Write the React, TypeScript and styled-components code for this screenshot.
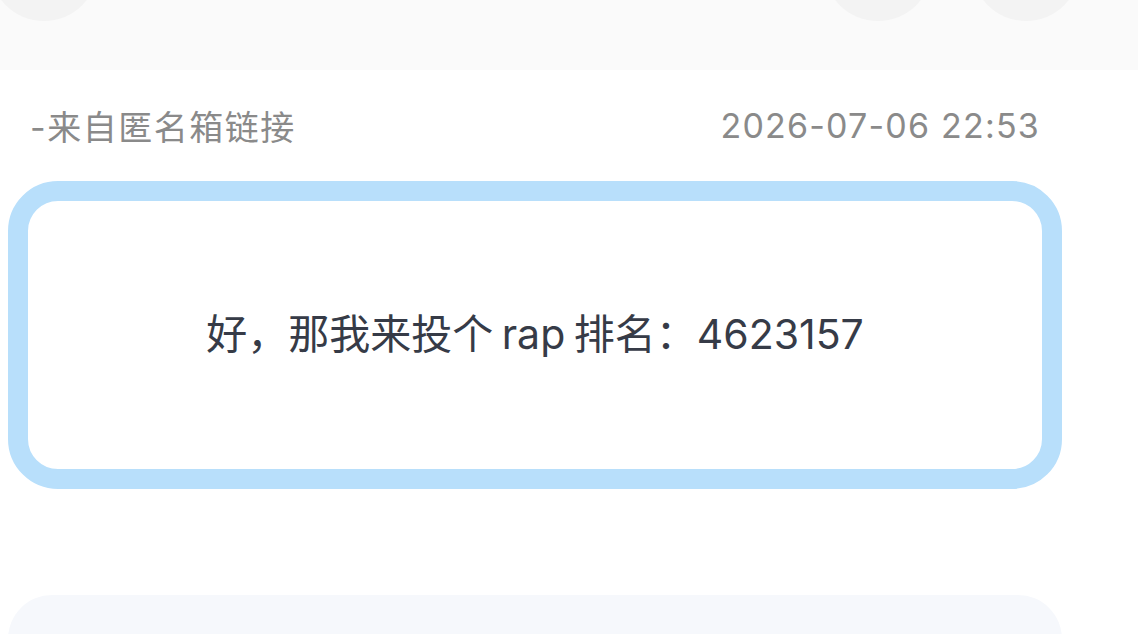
import React from "react";
import styled, { createGlobalStyle } from "styled-components";

const GlobalStyle = createGlobalStyle`
  html, body {
    margin: 0;
    padding: 0;
    background: #ffffff;
    overflow: hidden;
  }
  body {
    font-family: Inter, "Noto Sans CJK SC", "Noto Sans", sans-serif;
  }
`;

const Page = styled.div`
  width: 1138px;
  height: 634px;
  overflow: hidden;
  background: #ffffff;
`;

const TopBar = styled.div`
  height: 70px;
  background: #fafafa;
  display: flex;
  align-items: flex-start;
  justify-content: space-between;
  padding-right: 58px;
  overflow: hidden;
`;

const IconGroup = styled.div`
  display: flex;
  gap: 40px;
`;

const RoundButton = styled.div<{ $offset?: number }>`
  width: 108px;
  height: 108px;
  border-radius: 50%;
  background: #f3f3f3;
  margin-top: -87px;
  margin-left: ${(p) => p.$offset ?? 0}px;
  flex-shrink: 0;
`;

const Content = styled.div`
  margin-left: 8px;
  width: 1054px;
`;

const MetaRow = styled.div`
  display: flex;
  justify-content: space-between;
  align-items: center;
  height: 40px;
  margin-top: 35px;
  padding: 0 22px;
  color: #8a8a8a;
  font-size: 34px;
`;

const Source = styled.span`
  letter-spacing: 1.5px;
`;

const Time = styled.span`
  letter-spacing: 1.2px;
`;

const MessageCard = styled.div`
  box-sizing: border-box;
  margin-top: 36px;
  height: 308px;
  padding-bottom: 8px;
  border: 20px solid #b8dffb;
  border-radius: 50px;
  display: flex;
  align-items: center;
  justify-content: center;
  color: #363b47;
  font-size: 41px;
  word-spacing: -3px;
`;

const NextCard = styled.div`
  margin-top: 106px;
  height: 120px;
  border-radius: 44px;
  background: #f6f8fc;
`;

const App: React.FC = () => {
  return (
    <Page>
      <GlobalStyle />
      <TopBar>
        <RoundButton $offset={-10} />
        <IconGroup>
          <RoundButton />
          <RoundButton />
        </IconGroup>
      </TopBar>
      <Content>
        <MetaRow>
          <Source>-来自匿名箱链接</Source>
          <Time>2026-07-06 22:53</Time>
        </MetaRow>
        <MessageCard>好，那我来投个 rap 排名：4623157</MessageCard>
        <NextCard />
      </Content>
    </Page>
  );
};

export default App;
